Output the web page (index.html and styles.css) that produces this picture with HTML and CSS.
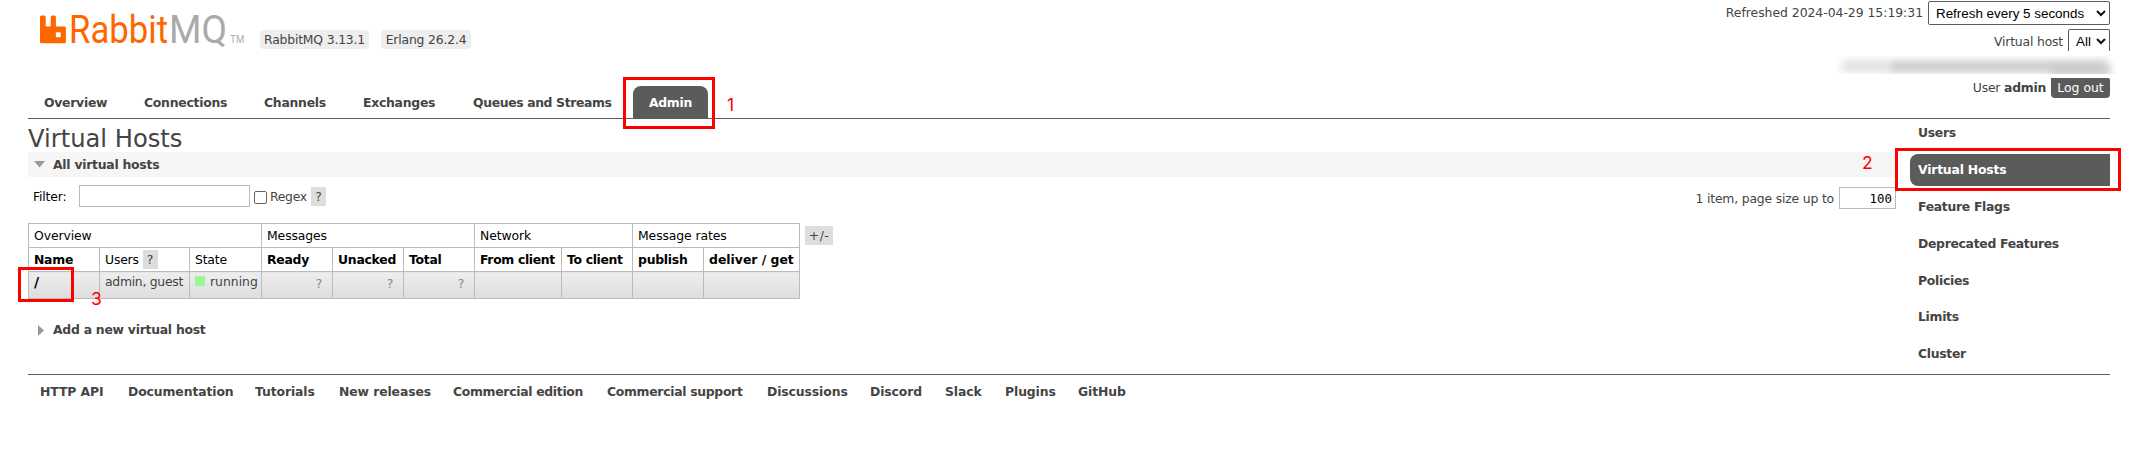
FILE: index.html
```html
<!DOCTYPE html>
<html lang="en">
<head>
<meta charset="utf-8">
<title>RabbitMQ Management</title>
<link rel="stylesheet" href="styles.css">
</head>
<body>
<header class="header">
  <div class="brand">
    <svg class="logo" width="202" height="50" viewBox="0 0 202 50">
      <path fill="#ff6600" d="M13.500 15.500h2.700a1.500 1.500 0 0 1 1.500 1.500v8.600q0 1 1 1h3q1 0 1-1v-8.600a1.500 1.500 0 0 1 1.500-1.500h2.200a1.500 1.500 0 0 1 1.500 1.500v8.600q0 1 1 1h7.500a1.500 1.500 0 0 1 1.500 1.500v13.600a1.500 1.500 0 0 1-1.500 1.500H13.500a1.500 1.500 0 0 1-1.500-1.500V17a1.500 1.500 0 0 1 1.500-1.500zM28.800 32.300a1 1 0 0 0-1 1v3a1 1 0 0 0 1 1h3a1 1 0 0 0 1-1v-3a1 1 0 0 0-1-1z" fill-rule="evenodd"/>
      <text class="logo-a" x="41" y="43" textLength="99" lengthAdjust="spacingAndGlyphs">Rabbit</text>
      <text class="logo-b" x="141" y="43" textLength="58" lengthAdjust="spacingAndGlyphs">MQ</text>
    </svg>
    <span class="tm">TM</span>
    <span class="ver v1">RabbitMQ 3.13.1</span>
    <span class="ver v2">Erlang 26.2.4</span>
  </div>
  <div class="status">
    <div class="row r1"><span class="refreshed">Refreshed 2024-04-29 15:19:31</span><div class="sel s1"><span>Refresh every 5 seconds</span><svg width="10" height="7" viewBox="0 0 10 7"><path d="M1 1l4 4 4-4" fill="none" stroke="#111" stroke-width="2"/></svg></div></div>
    <div class="row r2"><span>Virtual host</span><div class="sel s2"><span>All</span><svg width="10" height="7" viewBox="0 0 10 7"><path d="M1 1l4 4 4-4" fill="none" stroke="#111" stroke-width="2"/></svg></div></div>
    <div class="redacted"><i class="b1"></i><i class="b2"></i><i class="b3"></i></div>
    <div class="row r3"><span>User <b>admin</b></span><span class="logout">Log out</span></div>
  </div>
  <nav class="tabs">
    <a class="t1">Overview</a><a class="t2">Connections</a><a class="t3">Channels</a><a class="t4">Exchanges</a><a class="t5">Queues and Streams</a><a class="active">Admin</a>
  </nav>
</header>
<div class="body">
  <main class="main">
    <h1>Virtual Hosts</h1>
    <h2 class="section open"><svg width="11" height="7"><path d="M0 0h11L5.500 6.500z" fill="#999"/></svg><span>All virtual hosts</span></h2>
    <div class="filter">
      <span class="flabel">Filter:</span><div class="finput"></div><div class="check"></div><span class="regex">Regex</span><span class="help">?</span>
      <span class="paging">1 item, page size up to</span><div class="psize">100</div>
    </div>
    <div class="tablewrap">
      <table>
        <colgroup><col class="c1"><col class="c2"><col class="c3"><col class="c4"><col class="c5"><col class="c6"><col class="c7"><col class="c8"><col class="c9"><col class="c10"></colgroup>
        <tr class="groups"><td colspan="3">Overview</td><td colspan="3">Messages</td><td colspan="2">Network</td><td colspan="2">Message rates</td></tr>
        <tr class="heads"><th>Name</th><td>Users <span class="help">?</span></td><td>State</td><th>Ready</th><th>Unacked</th><th>Total</th><th class="tight">From client</th><th class="tight">To client</th><th>publish</th><th class="wide">deliver / get</th></tr>
        <tr class="data"><th>/</th><td>admin, guest</td><td class="state"><i class="green"></i>running</td><td class="q">?</td><td class="q">?</td><td class="q">?</td><td></td><td></td><td></td><td></td></tr>
      </table>
      <span class="plus">+/-</span>
    </div>
    <h2 class="section closed"><svg width="7" height="11"><path d="M0 0v11L6 5.500z" fill="#999"/></svg><span>Add a new virtual host</span></h2>
  </main>
  <aside class="side">
    <a>Users</a><a class="active">Virtual Hosts</a><a>Feature Flags</a><a>Deprecated Features</a><a>Policies</a><a>Limits</a><a>Cluster</a>
  </aside>
</div>
<footer class="footer">
  <a class="f1">HTTP API</a><a class="f2">Documentation</a><a class="f3">Tutorials</a><a class="f4">New releases</a><a class="f5">Commercial edition</a><a class="f6">Commercial support</a><a class="f7">Discussions</a><a class="f8">Discord</a><a class="f9">Slack</a><a class="f10">Plugins</a><a class="f11">GitHub</a>
</footer>
<div class="mark m1"></div><div class="mark m2"></div><div class="mark m3"></div>
<span class="num n1">1</span><span class="num n2">2</span><span class="num n3">3</span>
</body>
</html>
```
FILE: styles.css
```css
* { box-sizing: border-box; }
body { margin: 0; position: relative; width: 2140px; height: 472px; overflow: hidden; background: #fff; color: #444; font: 12.4px/16px "DejaVu Sans", Verdana, sans-serif; letter-spacing: -.18px; white-space: nowrap; }
b, th, h2, .tabs, .side, .footer { font-weight: bold; letter-spacing: -.25px; }
.header { display: grid; grid-template-columns: 1fr 500px; grid-template-rows: 86px 32px; margin: 0 30px 0 28px; border-bottom: 1px solid #5b5b5b; height: 119px; }
.brand { display: flex; align-items: flex-start; height: 86px; }
.logo { flex: none; overflow: visible; letter-spacing: 0; }
.logo text { font-family: Roboto, sans-serif; font-size: 38.5px; font-weight: 400; }
.logo-a { fill: #ff6600; }
.logo-b { fill: #aaa; }
.tm { font: 10px/12px "Liberation Sans", sans-serif; letter-spacing: 0; color: #aaa; margin-top: 34px; width: 30px; }
.ver { height: 19px; margin-top: 30px; border-radius: 4px; background: #eee; line-height: 19px; text-align: center; letter-spacing: -.18px; }
.v1 { width: 109px; }
.v2 { width: 90px; margin-left: 12px; }
.status { display: flex; flex-direction: column; align-items: flex-end; height: 98px; }
.status > div { flex: none; }
.row { display: flex; align-items: center; justify-content: flex-end; }
.r1 { height: 24px; margin-top: 1px; gap: 5px; }
.refreshed { letter-spacing: -.02px; }
.r2 { height: 22px; margin-top: 4px; gap: 5px; }
.r2 > span { margin-top: 3px; }
.sel { display: flex; align-items: center; justify-content: space-between; border: 1px solid #5b5b5b; border-radius: 2px; color: #000; font: 13.400px "Liberation Sans", sans-serif; letter-spacing: 0; padding: 0 3px 0 7px; height: 24px; }
.s1 { width: 182px; }
.s2 { width: 42px; height: 22px; border-bottom: 0; border-radius: 2px 2px 0 0; padding-top: 2px; }
.redacted { position: relative; width: 280px; height: 18px; margin: 5px -6px 0 0; overflow: hidden; }
.redacted i { position: absolute; filter: blur(4px); background: #c6c6c6; }
.b1 { left: 6px; top: 5px; width: 46px; height: 10px; opacity: .6; }
.b2 { left: 53px; top: 5px; width: 219px; height: 11px; }
.b3 { left: 215px; top: 12px; width: 59px; height: 7px; }
.r3 { height: 20px; margin-top: 4px; gap: 5px; }
.logout { background: #5b5b5b; color: #fff; width: 59px; height: 20px; line-height: 19px; border-radius: 0 2px 4px 4px; text-align: center; letter-spacing: 0; }
.tabs { grid-column: 1 / 3; display: flex; padding-left: 16px; line-height: 34px; }
.t1 { width: 100px; } .t2 { width: 120px; } .t3 { width: 99px; } .t4 { width: 110px; } .t5 { width: 160px; letter-spacing: -.36px; }
.tabs .active { width: 75px; height: 32px; border-radius: 8px 8px 0 0; background: #5b5b5b; color: #fff; text-align: center; }
.body { display: flex; margin-left: 28px; height: 255px; }
.main { width: 1868px; }
h1 { margin: 0; padding-top: 7px; height: 33px; font: 24.200px/26px "DejaVu Sans", sans-serif; letter-spacing: 0; }
.section { display: flex; align-items: center; margin: 0; font-size: 12.4px; }
.open { height: 25px; background: #f6f6f6; padding-left: 6px; gap: 8px; }
.closed { margin-top: 22px; padding-left: 10px; gap: 8px; height: 18px; }
.filter { display: flex; align-items: center; height: 46px; padding: 0 0 8px 5px; color: #000; }
.flabel { width: 46px; margin-top: 1px; }
.finput { width: 171px; height: 22px; border: 1px solid #bbb; }
.check { width: 13px; height: 13px; border: 1px solid #666; border-radius: 2px; margin: 3px 3px 0 4px; }
.regex { width: 41px; margin-top: 1px; color: #444; letter-spacing: -.3px; }
.help { display: inline-block; background: #ddd; color: #444; width: 15px; height: 19px; line-height: 19px; text-align: center; }
.paging { margin: 5px 5px 0 auto; color: #444; }
.psize { width: 57px; height: 22px; margin-top: 4px; border: 1px solid #bbb; color: #000; text-align: right; line-height: 21px; padding-right: 3px; font-family: "DejaVu Sans Mono", monospace; letter-spacing: 0; }
.tablewrap { display: flex; height: 76px; }
table { border-collapse: collapse; table-layout: fixed; width: 772px; height: 76px; color: #000; }
td, th { border: 1px solid #bbb; padding: 0 5px; text-align: left; height: 24px; }
.groups td { letter-spacing: -.1px; }
.heads .tight { letter-spacing: -.33px; }
.heads .wide { letter-spacing: 0; }
.data td, .data th { height: 27px; background: linear-gradient(#eee, #ddd); vertical-align: top; padding-top: 2px; }
.data th { font-size: 14px; }
.data td { color: #444; letter-spacing: -.28px; }
.data .state { letter-spacing: 0; }
.data .q { text-align: right; padding: 4px 10px 0 0; color: #888; }
.c1 { width: 71px; } .c2 { width: 90px; } .c3 { width: 72px; } .c4, .c5, .c6 { width: 71px; } .c7 { width: 87px; } .c8 { width: 71px; } .c9 { width: 71px; } .c10 { width: 96px; }
.green { display: inline-block; width: 10px; height: 10px; background: #98f898; margin-right: 5px; }
.plus { background: #ddd; width: 28px; height: 19px; margin: 3px 0 0 5px; line-height: 19px; text-align: center; letter-spacing: .5px; }
.side { width: 200px; margin-left: 14px; display: flex; flex-direction: column; gap: 4.900px; margin-top: -2px; letter-spacing: -.3px; }
.side a { flex: none; height: 32px; line-height: 32px; padding-left: 8px; }
.side .active { background: #5b5b5b; color: #fff; border-radius: 8px 0 0 8px; letter-spacing: -.2px; }
.footer { margin: 0 30px 0 28px; border-top: 1px solid #5b5b5b; padding-left: 12px; display: flex; line-height: 34px; letter-spacing: -.1px; }
.mark { position: absolute; border: 3px solid #f00; }
.m1 { left: 623px; top: 77px; width: 92px; height: 52px; }
.m2 { left: 1895px; top: 148px; width: 226px; height: 43px; }
.m3 { left: 18px; top: 267px; width: 56px; height: 35px; }
.num { position: absolute; color: #f00; font: 17.5px/20px Inter, sans-serif; letter-spacing: 0; }
.n1 { left: 727px; top: 95px; }
.n2 { left: 1862px; top: 153px; }
.n3 { left: 91px; top: 289px; }
.f1 { width: 88px; } .f2 { width: 127px; } .f3 { width: 84px; } .f4 { width: 114px; } .f5 { width: 154px; letter-spacing: -.3px; } .f6 { width: 160px; letter-spacing: -.3px; } .f7 { width: 103px; } .f8 { width: 75px; } .f9 { width: 60px; } .f10 { width: 73px; }
```
